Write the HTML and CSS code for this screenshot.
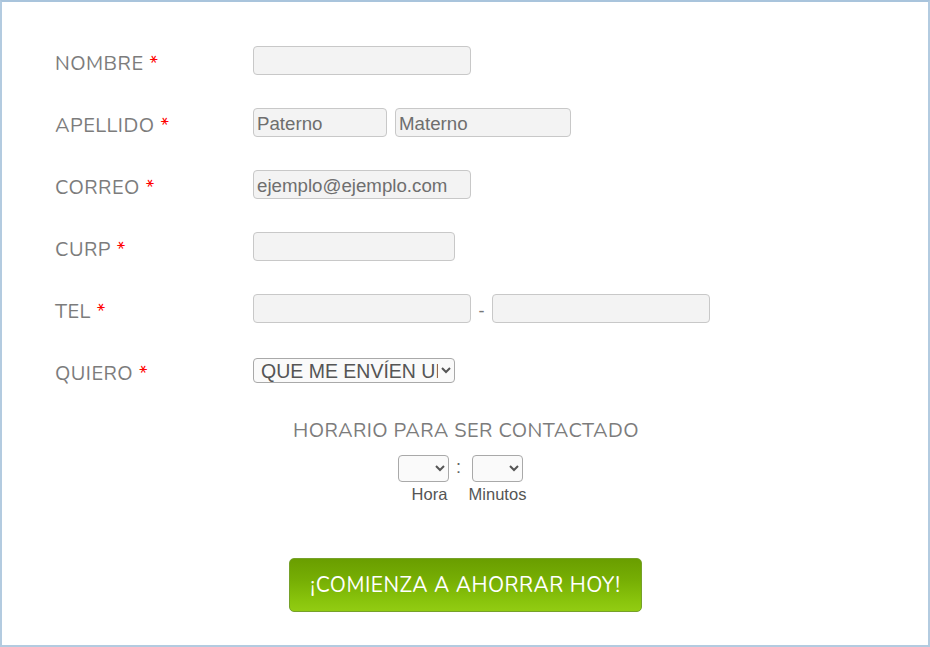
FILE: index.html
```html
<!DOCTYPE html>
<html lang="es">
<head>
<meta charset="utf-8">
<title>Formulario</title>
<link rel="stylesheet" href="styles.css">
</head>
<body>
<div class="frame">
  <form class="form">
    <div class="row">
      <label class="label">NOMBRE <span class="req">*</span></label>
      <div class="fields"><input class="inp w218" type="text"></div>
    </div>
    <div class="row">
      <label class="label">APELLIDO <span class="req">*</span></label>
      <div class="fields">
        <input class="inp w134" type="text" placeholder="Paterno">
        <input class="inp w176" type="text" placeholder="Materno">
      </div>
    </div>
    <div class="row">
      <label class="label">CORREO <span class="req">*</span></label>
      <div class="fields"><input class="inp w218" type="text" placeholder="ejemplo@ejemplo.com"></div>
    </div>
    <div class="row">
      <label class="label">CURP <span class="req">*</span></label>
      <div class="fields"><input class="inp w202" type="text"></div>
    </div>
    <div class="row">
      <label class="label">TEL <span class="req">*</span></label>
      <div class="fields tel">
        <input class="inp w218" type="text">
        <span class="dash">-</span>
        <input class="inp w218" type="text">
      </div>
    </div>
    <div class="row">
      <label class="label">QUIERO <span class="req">*</span></label>
      <div class="fields">
        <select class="sel quiero">
          <option>QUE ME ENVÍEN UNA COTIZACIÓN</option>
        </select>
      </div>
    </div>
    <div class="schedule">
      <div class="sched-title">HORARIO PARA SER CONTACTADO</div>
      <div class="time">
        <select class="sel small"><option></option></select>
        <span class="colon">:</span>
        <select class="sel small"><option></option></select>
        <span class="cap cap-hora">Hora</span>
        <span></span>
        <span class="cap">Minutos</span>
      </div>
    </div>
    <div class="actions">
      <button type="button" class="btn">¡COMIENZA A AHORRAR HOY!</button>
    </div>
  </form>
</div>
</body>
</html>
```

FILE: styles.css
```css
html, body {
  margin: 0;
  padding: 0;
  background: #fff;
}
.frame {
  box-sizing: border-box;
  width: 930px;
  height: 647px;
  border-top: 2px solid #a9c4dc;
  border-left: 2px solid #b3cbe0;
  border-right: 2px solid #b3cbe0;
  border-bottom: 2px solid #b3cbe0;
  padding: 44px 0 0 53px;
  font-family: "Nunito", "Open Sans", "Liberation Sans", sans-serif;
}
.row {
  display: flex;
  align-items: center;
  height: 29px;
  margin-bottom: 33px;
}
.label {
  width: 198px;
  flex: none;
  font-size: 20px;
  letter-spacing: 0.45px;
  color: #7c7c7c;
  font-weight: 400;
  padding-top: 5px;
}
.req {
  color: #f00;
}
.fields {
  display: flex;
  align-items: center;
  gap: 8px;
}
.tel {
  gap: 0;
}
.dash {
  width: 21px;
  text-align: center;
  font-family: "Liberation Sans", Arial, sans-serif;
  font-size: 18px;
  color: #777;
  padding-top: 6px;
  padding-right: 0;
}
.inp {
  box-sizing: border-box;
  height: 29px;
  border: 1px solid #c8c8c8;
  border-radius: 4px;
  background: #f3f3f3;
  font-family: "Liberation Sans", Arial, sans-serif;
  font-size: 18.7px;
  color: #6e6e6e;
  padding: 2px 3px 0;
  margin: 0;
}
.inp::placeholder {
  color: #6e6e6e;
  opacity: 1;
}
.w218 { width: 218px; }
.w134 { width: 134px; }
.w176 { width: 176px; }
.w202 { width: 202px; }
.sel {
  box-sizing: border-box;
  font-family: "Liberation Sans", Arial, sans-serif;
  color: #555;
  border: 1px solid #a9a9a9;
  border-radius: 4px;
  background: #fafafa;
  margin: 0;
}
.quiero {
  width: 202px;
  height: 25px;
  font-size: 19.5px;
  padding: 0 0 0 3px;
  margin-top: -1px;
}
.schedule {
  display: flex;
  flex-direction: column;
  align-items: center;
  width: 822px;
  margin-top: 4px;
}
.sched-title {
  font-size: 20px;
  letter-spacing: 0.4px;
  color: #7c7c7c;
  line-height: 26px;
}
.time {
  display: grid;
  grid-template-columns: 51px 23px 51px;
  justify-items: center;
  margin-top: 11px;
  margin-right: 11px;
}
.sel.small {
  width: 51px;
  height: 27px;
}
.colon {
  font-family: "Liberation Sans", Arial, sans-serif;
  font-size: 18px;
  color: #666;
  line-height: 25px;
  padding-right: 4px;
}
.cap {
  font-family: "Liberation Sans", Arial, sans-serif;
  font-size: 16.5px;
  color: #555;
  margin-top: 3px;
  white-space: nowrap;
}
.cap-hora {
  margin-left: 12px;
}
.actions {
  width: 821px;
  display: flex;
  justify-content: center;
  margin-top: 54px;
}
.btn {
  box-sizing: border-box;
  width: 353px;
  height: 54px;
  border: 1px solid #76a12a;
  border-radius: 5px;
  background: linear-gradient(to bottom, #6a9e00 0%, #76ae04 40%, #89c40c 80%, #92cc12 100%);
  color: #fff;
  font-family: "Nunito", "Open Sans", "Liberation Sans", sans-serif;
  font-size: 21px;
  letter-spacing: 0.5px;
  font-weight: 400;
  padding: 0;
  cursor: pointer;
}
```
